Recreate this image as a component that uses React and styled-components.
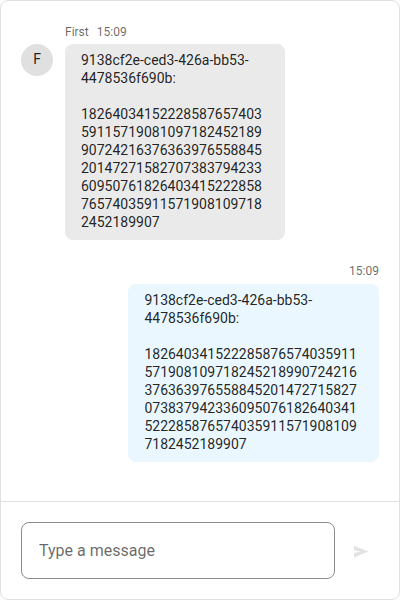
import React from "react";
import styled, { createGlobalStyle } from "styled-components";

const GlobalStyle = createGlobalStyle`
  *, *::before, *::after { box-sizing: border-box; }
  body {
    margin: 0;
    background: #fff;
    font-family: Roboto, "Liberation Sans", sans-serif;
    color: rgba(0, 0, 0, 0.87);
  }
`;

const Chat = styled.main`
  display: flex;
  flex-direction: column;
  width: 400px;
  height: 600px;
  border: 1px solid #e0e0e0;
  border-radius: 8px;
  background: #fff;
  overflow: hidden;
`;

const Messages = styled.div`
  flex: 1;
  display: flex;
  flex-direction: column;
  gap: 24px;
  padding: 24px 20px 0;
`;

const Message = styled.article`
  display: flex;
  align-items: flex-start;
  gap: 12px;
  justify-content: ${({ $own }) => ($own ? "flex-end" : "flex-start")};
`;

const Avatar = styled.div`
  flex: none;
  display: flex;
  align-items: center;
  justify-content: center;
  width: 32px;
  height: 32px;
  margin-top: 19px;
  padding-bottom: 2px;
  border-radius: 50%;
  background: #e0e0e0;
  font-size: 14px;
  line-height: 18px;
`;

const MessageBody = styled.div`
  display: flex;
  flex-direction: column;
  align-items: ${({ $own }) => ($own ? "flex-end" : "flex-start")};
`;

const Meta = styled.header`
  display: flex;
  gap: 8px;
  height: ${({ $own }) => ($own ? "20px" : "19px")};
  font-size: 12px;
  line-height: 14px;
  color: rgba(0, 0, 0, 0.6);
`;

const Bubble = styled.div`
  width: ${({ $own }) => ($own ? "251px" : "220px")};
  padding: ${({ $own }) => ($own ? "7px 16px 9px 16.4px" : "7px 16px 9px")};
  border-radius: 8px;
  background: ${({ $own }) => ($own ? "#eaf7ff" : "#eaeaea")};
  font-size: 14px;
  line-height: 18px;
  white-space: pre-wrap;
  overflow-wrap: break-word;
`;

const Composer = styled.form`
  flex: none;
  display: flex;
  align-items: center;
  height: 98px;
  padding: 0 20px;
  border-top: 1px solid #e0e0e0;
`;

const Input = styled.input`
  width: 314px;
  height: 57px;
  padding: 0 17px;
  border: 1px solid #8c8c8c;
  border-radius: 8px;
  background: transparent;
  font: 16px/24px Roboto, "Liberation Sans", sans-serif;
  outline: none;
  &::placeholder { color: rgba(0, 0, 0, 0.6); opacity: 1; }
`;

const SendButton = styled.button`
  display: flex;
  margin: 2px 0 0 18px;
  padding: 0;
  border: 0;
  background: none;
  color: #e3e3e3;
`;

const SendIcon = () => (
  <svg width="16" height="16" viewBox="0 0 16 16" fill="currentColor" aria-hidden="true">
    <path d="M1 1.7L15.4 7.6 1 13.5V9L7.4 7.6 1 6.2z" />
  </svg>
);

const content =
  "9138cf2e-ced3-426a-bb53-4478536f690b:\n\n" +
  "18264034152228587657403591157190810971824521899072421637636397655884520147271582707383794233609507618264034152228587657403591157190810971" +
  "82452189907";

const messages = [
  { id: 1, author: "First", time: "15:09", text: content },
  { id: 2, own: true, time: "15:09", text: content },
];

export default function App() {
  return (
    <>
      <GlobalStyle />
      <Chat>
        <Messages>
          {messages.map(({ id, author, own, time, text }) => (
            <Message key={id} $own={own}>
              {!own && <Avatar>{author[0]}</Avatar>}
              <MessageBody $own={own}>
                <Meta $own={own}>
                  {author && <span>{author}</span>}
                  <time>{time}</time>
                </Meta>
                <Bubble $own={own}>{text}</Bubble>
              </MessageBody>
            </Message>
          ))}
        </Messages>
        <Composer>
          <Input placeholder="Type a message" />
          <SendButton type="button" aria-label="Send" disabled>
            <SendIcon />
          </SendButton>
        </Composer>
      </Chat>
    </>
  );
}
